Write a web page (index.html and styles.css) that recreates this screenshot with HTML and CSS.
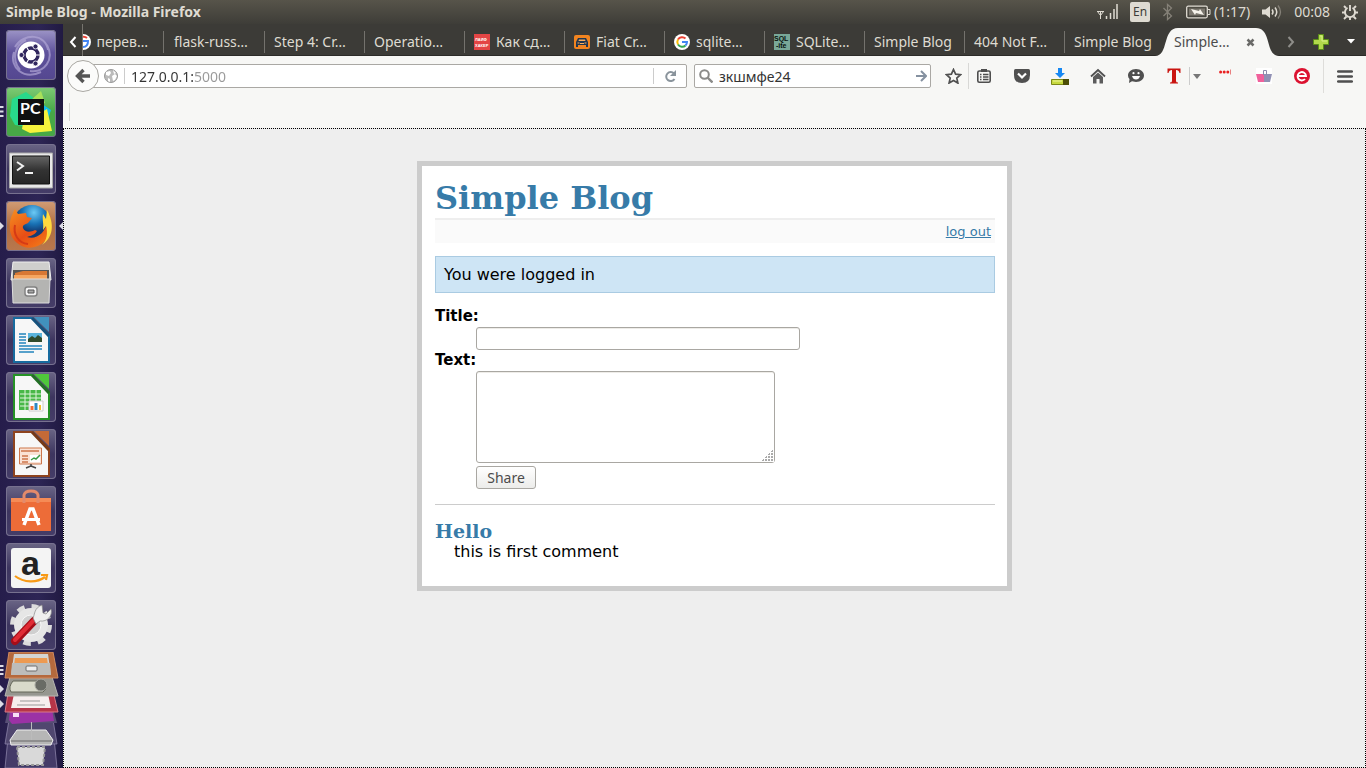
FILE: index.html
```html
<!DOCTYPE html>
<html lang="en">
<head>
<meta charset="utf-8">
<title>Simple Blog</title>
<link rel="stylesheet" href="styles.css">
</head>
<body>
<div class="desktop">
  <header class="panel">
    <span class="panel-title">Simple Blog - Mozilla Firefox</span>
    <div class="indicators">
      <svg class="ind-signal" width="22" height="18" viewBox="0 0 22 18" fill="none" stroke="#dfdbd2"><path d="M1 8.500h7M1.500 8.500l3 4 3-4M4.500 8v8"/><path d="M10.500 13v3M14.500 10v6M18 6v10M21 1v15" stroke-width="1.500"/></svg>
      <span class="keyboard">En</span>
      <svg width="12" height="18" viewBox="0 0 12 18" fill="none" stroke="#858178" stroke-width="1.300"><path d="M1.500 5l8 8-4 3.500v-15l4 3.500-8 8"/></svg>
      <div class="battery">
        <svg width="25" height="14" viewBox="0 0 25 14"><rect x=".7" y="1.200" width="20.600" height="11.600" rx="1.500" fill="none" stroke="#dfdbd2" stroke-width="1.300"/><rect x="3" y="3.500" width="16" height="7" fill="#7c786f"/><path d="M22 4.500h2v5h-2" fill="none" stroke="#dfdbd2"/><path d="M5 4l8 2 1-2 4 6-8-2-1 2z" fill="#f5f2ea"/></svg>
        <span>(1:17)</span>
      </div>
      <svg width="20" height="16" viewBox="0 0 20 16"><path d="M0 5.500h3.500L8 2v12l-4.500-3.500H0z" fill="#dfdbd2"/><path d="M10 5.500q2 2.500 0 5M13 3.500q3.500 4.500 0 9" fill="none" stroke="#dfdbd2" stroke-width="1.500"/><path d="M16 1.500q5 6.500 0 13" fill="none" stroke="#858178" stroke-width="1.300"/></svg>
      <span class="clock">00:08</span>
      <svg width="16" height="16" viewBox="0 0 16 16" fill="none" stroke="#dfdbd2"><path d="M5.500 3.800a5 5 0 1 0 5 0M8 1v6" stroke-width="1.900"/><path d="M2 2l2 2M14 2l-2 2M0 8.500h3M16 8.500h-3M2 15l2.500-2.500M14 15l-2.500-2.500M8 13v3" stroke-width="1.900"/></svg>
    </div>
  </header>

  <div class="workspace">
    <nav class="launcher" aria-label="Launcher">
      <button class="tile tile-dash" aria-label="Search your computer">
        <svg viewBox="0 0 50 50"><g fill="none" stroke="#b0a7d6" stroke-width="2" opacity=".7"><path d="M9 17C18 2 40 4 42 20M41 15c8 15-3 28-17 26M35 42C18 50 3 38 8 22M14 40C5 29 9 15 20 10"/></g><circle cx="25" cy="25" r="13.500" fill="#fff"/><circle cx="25" cy="25" r="7" fill="none" stroke="#31275e" stroke-width="3.500"/><g stroke="#fff" stroke-width="1.200"><path d="M25 25l12 0M25 25l-6-11M25 25l-6 11"/></g><circle cx="25" cy="25" r="5" fill="#fff"/><g fill="#31275e" stroke="#fff" stroke-width=".8"><circle cx="15.500" cy="25" r="2.500"/><circle cx="29.500" cy="16.500" r="2.500"/><circle cx="29.500" cy="33.500" r="2.500"/></g></svg>
      </button>
      <button class="tile tile-pycharm" aria-label="PyCharm">
        <svg viewBox="0 0 50 50"><path d="M6 12l14-7 12 9-10 26-13-2-5-9z" fill="#28d98b"/><path d="M35 4l4 12-13 6-2-8z" fill="#a8e05a"/><path d="M36 17l9 6-3 9-8 2z" fill="#13bdf0"/><path d="M17 36l24-14 5 22-22 2-8-4z" fill="#f6f23c"/><rect x="12" y="12" width="26" height="26" fill="#101010"/><text x="14" y="27" class="glyph-pc">PC</text><path d="M15 34h9" stroke="#fff" stroke-width="2"/></svg>
        <svg class="pips" viewBox="0 0 4 12"><path d="M0 1h3.500M0 5.500h3.500M0 10h3.500" stroke="#dcdce6" stroke-width="2"/></svg>
      </button>
      <button class="tile" aria-label="Terminal">
        <svg viewBox="0 0 50 50"><defs><linearGradient id="term" x2="0" y2="1"><stop stop-color="#666"/><stop offset=".5" stop-color="#333"/><stop offset="1" stop-color="#262626"/></linearGradient></defs><path d="M3.500 9h43v35h-43z" fill="#e8e8e8" stroke="#aaa"/><path d="M6.500 12h37v28h-37z" fill="url(#term)" stroke="#111"/><path d="M11 18l6 4-6 4.500M19 29h8" fill="none" stroke="#f2f2f2" stroke-width="2"/></svg>
      </button>
      <button class="tile tile-firefox" aria-label="Firefox">
        <svg viewBox="0 0 50 50"><defs><radialGradient id="globe" cx=".55" cy=".2"><stop stop-color="#6ccaf5"/><stop offset=".6" stop-color="#1972b5"/><stop offset="1" stop-color="#133c75"/></radialGradient><linearGradient id="fox" x2=".8" y2="1"><stop stop-color="#f69020"/><stop offset=".6" stop-color="#e84d16"/><stop offset="1" stop-color="#f47c17"/></linearGradient></defs><circle cx="26" cy="23" r="19" fill="url(#globe)"/><path d="M43 12c4 11 2 22-4 28-8 8-20 9-28 2C2 35 2 21 7 12c1-3 2-4 2-4l3 5 8-1 1 4 5 1-4 5c-2 1-6 2-5 5 2 5 8 4 12 2l2 1c-3 5-8 5-10 6 9 3 19-4 20-16z" fill="url(#fox)"/><path d="M41 9c8 14 6 28-5 35 5-5 6-12 4-19l-3 4c1-7-1-10 0-16l3 5z" fill="#ffd93e"/><path d="M9 24c-2 9 3 18 13 19" fill="none" stroke="#d53b16" stroke-width="2"/></svg>
        <svg class="mark-left" viewBox="0 0 4 8"><path d="M0 0l4 4-4 4z" fill="#dcdce6"/></svg>
        <svg class="mark-right" viewBox="0 0 4 8"><path d="M4 0L0 4l4 4z" fill="#dcdce6"/></svg>
      </button>
      <button class="tile" aria-label="Files">
        <svg viewBox="0 0 50 50"><path d="M7 4h36l2 18H5z" fill="#cfcfcd" stroke="#eee"/><path d="M7 12h36v14H7z" fill="#555"/><path d="M9 15l8-2h24v12H9z" fill="#d87834"/><path d="M8 17h33v5H8z" fill="#f5a660"/><path d="M6 21h38l-1 24H7z" fill="#b4b4b2" stroke="#ddd"/><rect x="19" y="29" width="12" height="9" rx="2.500" fill="#f4f4f4" stroke="#828282" stroke-width="1.500"/><path d="M22 32h6v3h-6z" fill="#a8a8a8" stroke="#555"/></svg>
      </button>
      <button class="tile" aria-label="LibreOffice Writer">
        <svg viewBox="0 0 50 50"><path d="M8 3h18l17 17v27H8z" fill="#f7f7f7" stroke="#176b9f" stroke-width="2"/><path d="M28 2h15v15z" fill="#4191bd"/><path d="M26 3l17 18" stroke="#15517c" stroke-width="3"/><path d="M22 18h14v9H22z" fill="#5ab4dc"/><path d="M22 27v-3l4-3 3 2 3-3 4 3v4z" fill="#304b2c"/><g stroke="#2385bd" stroke-width="1.500"><path d="M13 19h7M13 22h7M13 25h7M13 28h7M13 31h23M13 34h23M13 37h15"/></g></svg>
      </button>
      <button class="tile" aria-label="LibreOffice Calc">
        <svg viewBox="0 0 50 50"><path d="M8 3h18l17 17v27H8z" fill="#f7f7f7" stroke="#269226" stroke-width="2"/><path d="M28 2h15v15z" fill="#4fc73b"/><path d="M26 3l17 18" stroke="#236e25" stroke-width="3"/><path d="M13 18h22v20H13z" fill="#48b848"/><path d="M14 22h21M14 26h21M14 30h21M14 34h21M19 18v20M24 18v20M30 18v20" stroke="#dff4dc"/><path d="M23 29h14v10H23z" fill="#fff" stroke="#ccc"/><path d="M26 34v4" stroke="#f46e35" stroke-width="3"/><path d="M30 31v7" stroke="#2c89c4" stroke-width="3"/><path d="M34 33v5" stroke="#f3bf32" stroke-width="2"/></svg>
      </button>
      <button class="tile" aria-label="LibreOffice Impress">
        <svg viewBox="0 0 50 50"><path d="M8 3h18l17 17v27H8z" fill="#f7f7f7" stroke="#8e431e" stroke-width="2"/><path d="M28 2h15v15z" fill="#c46a38"/><path d="M26 3l17 18" stroke="#773917" stroke-width="3"/><path d="M13.500 19h22v16h-22z" fill="#fae2d5" stroke="#cd764b"/><path d="M15 22h18M16 27h6M16 30h6M16 33h6" stroke="#cd764b" stroke-width="1.500"/><path d="M24 26h10v7H24z" fill="#fff"/><path d="M25 31l3-2 2 1 4-4" fill="none" stroke="#3a9a43" stroke-width="1.500"/><path d="M25 35v2l-5 2M25 37l5 2" fill="none" stroke="#444" stroke-width="1.500"/></svg>
      </button>
      <button class="tile" aria-label="Ubuntu Software">
        <svg viewBox="0 0 50 50"><path d="M5 12h40v33H5z" fill="#ed6c38"/><path d="M5 12h40v4H5z" fill="#f58b56"/><path d="M18 17V9q1-4 7-4t7 4v8" fill="none" stroke="#e38a6a" stroke-width="3"/><path d="M18 39l6-16h3l6 16" fill="none" stroke="#fff" stroke-width="3.500"/><path d="M16 33.500h18" stroke="#fff" stroke-width="3"/></svg>
      </button>
      <button class="tile" aria-label="Amazon">
        <svg viewBox="0 0 50 50"><rect x="5" y="5" width="40" height="40" rx="3" fill="#f4f4f4"/><text x="15" y="32" class="glyph-a">a</text><path d="M9 33c9 7 22 7 30 1M35 32l6 0-1 5" fill="none" stroke="#f79a17" stroke-width="2.200"/></svg>
      </button>
      <button class="tile" aria-label="System Settings">
        <svg viewBox="0 0 50 50"><circle cx="25" cy="25" r="18.500" fill="none" stroke="#ddd" stroke-width="5" stroke-dasharray="7.500 7.030"/><circle cx="25" cy="25" r="17" fill="#e6e6e6"/><circle cx="25" cy="25" r="10" fill="#cfcfcf" stroke="#f6f6f6"/><path d="M9 41l19-20" stroke="#a60d18" stroke-width="8" stroke-linecap="round"/><path d="M9 40l18-19" stroke="#e02c35" stroke-width="4" stroke-linecap="round"/><path d="M27 18c2-4 1-10 9-13l1 8 3 1 5-5c2 7-4 13-11 12l-4 3z" fill="#efefef" stroke="#888" stroke-width=".7"/></svg>
      </button>
      <button class="stack" aria-label="More applications">
        <svg width="63" height="118" viewBox="0 0 63 118"><g stroke="#8b83a8" stroke-width=".8"><path d="M9 76h44l4 40H5z" fill="#443b68"/><path d="M10 62h42l5 30H5z" fill="#50476f"/></g><path d="M17 95h28l-2 18H19z" fill="#d9d9d9" stroke="#999" stroke-dasharray="3 2" stroke-width="2"/><path d="M17 78h29l7 10-2 5H11l-1-5z" fill="#b6b6b6" stroke="#eee"/><path d="M11 89h41" stroke="#666"/><path d="M9 53h43l5 18H5z" fill="#574e75"/><path d="M10 57h42l2 12-42 3-3-4z" fill="#9b32a5"/><path d="M13 61h6v4h-6z" fill="#f8def6"/><path d="M9 35h43l6 25H5z" fill="#b63548" stroke="#d97a85"/><path d="M14 42h34l3 14H11z" fill="#f7eeee"/><path d="M20 49h20M17 53h28" stroke="#999"/><path d="M10 25h42l6 19H5z" fill="#96968f" stroke="#b7b7b2"/><path d="M13 29h28l5 8-3 3H11q-3-5 2-11z" fill="#d9dacb" stroke="#646659"/><circle cx="41" cy="33" r="6" fill="#696b65" stroke="#a4a49e"/><path d="M9 0h44l5 26H5z" fill="#b5693d" stroke="#d18b60"/><path d="M14 2h34l3 21H11z" fill="#d4d4d2"/><path d="M15 6h32l1 7H14z" fill="#ed9a52"/><path d="M12 11h38l1 12H11z" fill="#bdbdbb"/><rect x="26" y="14" width="11" height="5" rx="1" fill="#eee" stroke="#6c6c6c"/><path d="M31.500 70v18" stroke="#bbb"/><g stroke="#dcdce6" stroke-width="2"><path d="M0 14h3.500M0 18h3.500M0 22h3.500"/></g><path d="M0 33l4 4-4 4zM0 48l4 4-4 4z" fill="#dcdce6"/></svg>
      </button>
    </nav>

    <div class="browser">
      <div class="tabbar">
        <button class="tab-scroll" aria-label="Scroll tabs left"><svg width="8" height="12" viewBox="0 0 8 12"><path d="M6.500 1L2 6l4.500 5" fill="none" stroke="#fff" stroke-width="2"/></svg></button>
        <div class="tabs">
          <button class="tab tab-clipped"><svg width="16" height="16" viewBox="0 0 16 16"><circle cx="8" cy="8" r="8" fill="#fff"/><path d="M8 7h5q0 6-5 6" fill="none" stroke="#4285f4" stroke-width="2"/><path d="M12 4a5 5 0 0 0-8 2" fill="none" stroke="#ea4335" stroke-width="2"/></svg><span>перев…</span></button>
          <button class="tab"><span>flask-russ…</span></button>
          <button class="tab"><span>Step 4: Cr…</span></button>
          <button class="tab"><span>Operatio…</span></button>
          <button class="tab"><svg width="16" height="16" viewBox="0 0 16 16"><path d="M0 0h16v16H0z" fill="#e34545"/><text x="1" y="7" class="glyph-tiny" fill="#fff">ЛАЙФ</text><text x="1" y="13" class="glyph-tiny" fill="#fff">ХАКЕР</text></svg><span>Как сд…</span></button>
          <button class="tab"><svg width="16" height="16" viewBox="0 0 16 16"><rect y="1" width="16" height="14" rx="2" fill="#f18420"/><path d="M2 8l2-4h8l2 4v5h-2v-2H4v2H2z" fill="#203650"/><path d="M5 5.500h6l.5 1.500h-7z" fill="#f8ae5e"/><path d="M3.500 9h2M10.500 9h2M6 9.500h4" stroke="#f8ae5e"/></svg><span>Fiat Cr…</span></button>
          <button class="tab"><svg width="16" height="16" viewBox="0 0 16 16"><circle cx="8" cy="8" r="8" fill="#fff"/><g fill="none" stroke-width="2"><path d="M11.500 4.500A5 5 0 0 0 4 5.500" stroke="#ea4335"/><path d="M4 5.500a5 5 0 0 0 0 5" stroke="#fbbc05"/><path d="M4 10.500a5 5 0 0 0 7.500 1" stroke="#34a853"/><path d="M11.500 11.500A5 5 0 0 0 13 8H8" stroke="#4285f4"/></g></svg><span>sqlite…</span></button>
          <button class="tab"><svg width="16" height="16" viewBox="0 0 16 16"><path d="M0 0h16v16H0z" fill="#79a898"/><text x="0" y="7" class="glyph-sql">SQL</text><text x="2" y="14" class="glyph-sql">-ite</text></svg><span>SQLite…</span></button>
          <button class="tab"><span>Simple Blog</span></button>
          <button class="tab"><span>404 Not F…</span></button>
          <button class="tab"><span>Simple Blog</span></button>
          <div class="tab tab-active">
            <svg class="tab-shape" width="124" height="28" viewBox="0 0 124 28"><path d="M0 28C14 28 7 0 23 0h78c16 0 9 28 23 28z" fill="#f7f7f5"/></svg>
            <span class="tab-label">Simple…</span>
            <button class="tab-close" aria-label="Close tab"><svg width="9" height="9" viewBox="0 0 9 9"><path d="M1.500 1.500l6 6M7.500 1.500l-6 6" stroke="#6a6a68" stroke-width="2.500"/></svg></button>
          </div>
        </div>
        <div class="tab-tools">
          <button class="icon-btn" aria-label="Scroll tabs right"><svg width="8" height="12" viewBox="0 0 8 12"><path d="M1.500 1L6 6l-4.500 5" fill="none" stroke="#8e8d89" stroke-width="2"/></svg></button>
          <button class="icon-btn" aria-label="New tab"><svg width="16" height="16" viewBox="0 0 16 16"><path d="M5.500.5h5v5h5v5h-5v5h-5v-5h-5v-5h5z" fill="#b2d94c" stroke="#5b8d18"/><path d="M7 2h2v5h5" fill="none" stroke="#d9f08a"/></svg></button>
          <button class="icon-btn" aria-label="List all tabs"><svg width="8" height="5" viewBox="0 0 8 5"><path d="M0 0h8L4 4.500z" fill="#fff"/></svg></button>
        </div>
      </div>

      <div class="toolbar">
        <button class="back" aria-label="Back"><svg width="16" height="16" viewBox="0 0 16 16"><path d="M8.500 2L2.500 8l6 6M3 8h12" fill="none" stroke="#555" stroke-width="3.400"/></svg></button>
        <div class="urlbar">
          <svg width="14" height="14" viewBox="0 0 14 14"><circle cx="7" cy="7" r="6.500" fill="#bbb" stroke="#999"/><path d="M2 3l4-1 1 2-2 3-3-1zM8 7l3-2 2 2-2 4-2 1zM4 9l2 1v3l-2-1z" fill="#fff"/><path d="M9 1l3 3-2 1z" fill="#fff"/></svg>
          <i class="field-rule"></i>
          <input class="url-input" type="text" aria-label="Address" value="127.0.0.1:5000">
          <i class="field-rule"></i>
          <button class="reload" aria-label="Reload"><svg width="13" height="13" viewBox="0 0 13 13"><path d="M10 3.500A4.500 4.500 0 1 0 10.500 9" fill="none" stroke="#8a949c" stroke-width="2"/><path d="M12 0v6H6z" fill="#8a949c"/></svg></button>
        </div>
        <div class="searchbar">
          <svg width="14" height="14" viewBox="0 0 14 14"><circle cx="5.500" cy="5.500" r="4.300" fill="none" stroke="#8a8a88" stroke-width="2"/><path d="M8.500 8.500l5 5" stroke="#8a8a88" stroke-width="2.400"/></svg>
          <input class="search-input" type="text" aria-label="Search" value="зкшмфе24">
          <button class="go" aria-label="Go"><svg width="11" height="12" viewBox="0 0 11 12"><path d="M5 1l5 5-5 5M0 6h9" fill="none" stroke="#8591a0" stroke-width="2"/></svg></button>
        </div>
        <div class="tools">
          <button class="tool tool-star" aria-label="Bookmark"><svg width="17" height="16" viewBox="0 0 17 16"><path d="M8.500 1.500l2.100 4.700 5 .5-3.800 3.400 1.100 5-4.400-2.600L4.100 15l1.100-4.900L1.400 6.700l5-.5z" fill="none" stroke="#505050" stroke-width="1.700"/></svg></button>
          <button class="tool" aria-label="Bookmarks list"><svg width="14" height="14" viewBox="0 0 14 14"><rect x=".8" y="2" width="12.400" height="11.200" rx="1.500" fill="none" stroke="#4e4e4e" stroke-width="1.600"/><path d="M4 0h6v3H4z" fill="#4e4e4e"/><path d="M3 5.500h1.500M6 5.500h5.500M3 8h1.500M6 8h5.500M3 10.500h1.500M6 10.500h5.500" stroke="#4e4e4e" stroke-width="1.300"/></svg></button>
          <button class="tool" aria-label="Pocket"><svg width="16" height="14" viewBox="0 0 16 14"><path d="M1.500 0h13Q16 0 16 1.500V6q0 8-8 8T0 6V1.500Q0 0 1.500 0z" fill="#505050"/><path d="M4 4.500l4 4 4-4" fill="none" stroke="#fff" stroke-width="2.200"/></svg></button>
          <button class="tool" aria-label="Downloads"><svg width="18" height="18" viewBox="0 0 18 18"><path d="M7 1h4v5h3L9 11 4 6h3z" fill="#1788f3"/><path d="M.5 12.500h12v5H.5z" fill="#c7d93e" stroke="#7c8818"/><path d="M12 12h6v6h-6z" fill="#4c4e05"/><path d="M2 14h9" stroke="#edf59a"/></svg></button>
          <button class="tool" aria-label="Home"><svg width="16" height="16" viewBox="0 0 16 16"><path d="M1 8.500L8 2l7 6.500" fill="none" stroke="#505050" stroke-width="1.800"/><path d="M3 9l5-4.500L13 9v6.500H9.500V11h-3v4.500H3z" fill="#5c5c5c"/></svg></button>
          <button class="tool" aria-label="Hello"><svg width="16" height="16" viewBox="0 0 16 16"><path d="M8 1c5 0 8 3 8 6.500S13 14 8 14l-4-.8L1 15l.5-4Q0 9.500 0 7.500C0 4 3 1 8 1z" fill="#505050"/><path d="M4 8h8q-1 3.500-4 3.500T4 8z" fill="#fff"/><circle cx="5.500" cy="5.200" r="1.100" fill="#fff"/><circle cx="10.500" cy="5.200" r="1.100" fill="#fff"/></svg></button>
          <div class="tool-split">
            <button class="tool" aria-label="Translate"><svg width="14" height="16" viewBox="0 0 14 16"><path d="M.5.500h13V5h-1q-.5-3-3.500-3v11q0 1.500 2 1.500v1H3v-1q2 0 2-1.500V2Q2 2 1.500 5h-1z" fill="#ca1510"/></svg></button>
            <i class="split-rule"></i>
            <button class="tool-arrow" aria-label="Translate options"><svg width="8" height="5" viewBox="0 0 8 5"><path d="M0 0h8L4 5z" fill="#777"/></svg></button>
          </div>
          <button class="tool tool-dots" aria-label="Passwords"><svg width="12" height="16" viewBox="0 0 12 16"><g fill="#e92020"><circle cx="1.600" cy="4" r="1.500"/><circle cx="5.200" cy="4" r="1.500"/><circle cx="8.800" cy="4" r="1.500"/></g><path d="M11.500 1.500v5" stroke="#e98080"/></svg></button>
          <button class="tool" aria-label="Shopping"><svg width="16" height="16" viewBox="0 0 16 16"><path d="M0 0h16v16H0z" fill="#fff"/><path d="M0 6h8v8H2z" fill="#f0619b"/><path d="M8 6h8l-2 8H8z" fill="#9191b4"/><path d="M7.500 7V2.500h3V7" fill="none" stroke="#8c8cad"/></svg></button>
          <button class="tool" aria-label="Add-on"><svg width="16" height="16" viewBox="0 0 16 16"><circle cx="8" cy="8" r="8" fill="#dc1230"/><path d="M4.500 8H12A4.200 4.200 0 1 0 11 11" fill="none" stroke="#fff" stroke-width="1.900"/></svg></button>
          <i class="menu-rule"></i>
          <button class="tool tool-menu" aria-label="Open menu"><svg width="16" height="13" viewBox="0 0 16 13"><path d="M1.200 1.500h13.600M1.200 6.500h13.600M1.200 11.500h13.600" stroke="#4f4f4f" stroke-width="2.600" stroke-linecap="round"/></svg></button>
        </div>
      </div>
      <div class="addonbar"><i class="addon-rule"></i></div>

      <main class="viewport">
        <div class="page">
          <h1 class="blog-title">Simple Blog</h1>
          <div class="metanav"><a class="blog-link" href="#logout">log out</a></div>
          <div class="flash">You were logged in</div>
          <form class="add-entry">
            <label class="entry-label" for="title">Title:</label>
            <input class="entry-title" id="title" type="text">
            <label class="entry-label" for="text">Text:</label>
            <textarea class="entry-text" id="text"></textarea>
            <button class="share" type="button">Share</button>
          </form>
          <article class="entry">
            <h2 class="entry-heading">Hello</h2>
            <p class="entry-body">this is first comment</p>
          </article>
        </div>
      </main>
    </div>
  </div>
</div>
</body>
</html>
```
FILE: styles.css
```css
* { box-sizing: border-box; }
html, body { height: 100%; }
body {
  margin: 0;
  overflow: hidden;
  font: 14px/20px "Noto Sans", "Open Sans", sans-serif;
}
button {
  margin: 0;
  padding: 0;
  border: 0;
  background: none;
  font: inherit;
  color: inherit;
}
svg { display: block; flex: none; }
h1, h2, p { margin: 0; }

.desktop { display: flex; flex-direction: column; height: 100%; }

/* Top panel */
.panel {
  display: flex;
  align-items: center;
  justify-content: space-between;
  height: 24px;
  padding: 0 8px 0 6px;
  background: linear-gradient(#57544a, #3e3d38);
  color: #dfdbd2;
}
.panel-title { font-weight: 700; font-size: 14px; }
.indicators { display: flex; align-items: center; gap: 12px; }
.keyboard {
  width: 20px;
  border-radius: 2px;
  background: #dfdbd2;
  color: #3e3d38;
  font-size: 12px;
  text-align: center;
}
.battery { display: flex; align-items: center; gap: 3px; }

/* Launcher */
.workspace { display: flex; flex: 1; min-height: 0; }
.launcher {
  display: flex;
  flex-direction: column;
  align-items: center;
  gap: 7px;
  width: 63px;
  padding: 6px 1px 0 0;
  overflow: hidden;
  background: linear-gradient(90deg, #261d4b, #2d2555 60%, #211a42);
}
.tile {
  position: relative;
  flex: none;
  width: 50px;
  height: 50px;
  border-radius: 4px;
  background: linear-gradient(#6a6585, #3d355f 50%, #453d68);
  box-shadow: inset 0 0 0 1px #77718f;
}
.tile-dash { background: linear-gradient(#9c94c6, #5f529c 45%, #544790); }
.tile-pycharm { background: linear-gradient(#7ecb75, #47a846 50%); }
.tile-firefox { background: linear-gradient(#d29d75, #ae6d42 50%, #b9784e); }
.pips { position: absolute; left: -6px; top: 19px; width: 4px; height: 12px; }
.mark-left { position: absolute; left: -6px; top: 21px; width: 4px; height: 8px; }
.mark-right { position: absolute; right: -7px; top: 21px; width: 4px; height: 8px; }
.stack { flex: none; width: 63px; margin: -5px -1px 0 0; }
.glyph-pc { font: 700 16px Lato, sans-serif; fill: #fff; }
.glyph-a { font: 700 34px "Liberation Sans", sans-serif; fill: #222; }
.glyph-tiny { font: 700 4px "Liberation Sans", sans-serif; }
.glyph-sql { font: 700 7px "Liberation Sans", sans-serif; fill: #07120e; }

/* Tab strip */
.browser { display: flex; flex: 1; flex-direction: column; min-width: 0; background: #f7f7f5; }
.tabbar { display: flex; height: 32px; background: #3c3b37; color: #dfdbd2; box-shadow: inset 0 -1px #2c2b28; }
.tab-scroll {
  display: flex;
  align-items: center;
  justify-content: center;
  width: 20px;
  padding-top: 3px;
  border-right: 1px solid #77756f;
}
.tabs { display: flex; flex: 1; min-width: 0; }
.tab {
  position: relative;
  display: flex;
  flex: 0 0 100px;
  align-items: center;
  gap: 6px;
  padding: 4px 4px 0 10px;
  white-space: nowrap;
}
.tab::after {
  content: "";
  position: absolute;
  right: -1px;
  top: 7px;
  width: 1px;
  height: 22px;
  background: #74726d;
}
.tab:nth-last-child(2)::after, .tab-active::after { display: none; }
.tab-clipped { flex-basis: 81px; justify-content: flex-end; padding: 4px 16px 0 0; overflow: hidden; }
.tab-clipped::after { right: 0; }
.tab-active { color: #4c4c4c; }
.tab-shape { position: absolute; left: -9px; bottom: 0; }
.tab-label, .tab-close { position: relative; }
.tab-label { flex: 1; }
.tab-close { padding-right: 5px; }
.tab-tools { display: flex; align-items: center; padding-top: 3px; }
.icon-btn { display: flex; align-items: center; justify-content: center; width: 30px; height: 26px; }

/* Navigation toolbar */
.toolbar { display: flex; align-items: center; height: 40px; padding: 0 6px 0 4px; }
.back {
  position: relative;
  z-index: 1;
  display: flex;
  flex: none;
  align-items: center;
  justify-content: center;
  width: 32px;
  height: 32px;
  margin-right: -16px;
  border: 1px solid #a9a7a2;
  border-radius: 50%;
  background: #fbfbfa;
}
.urlbar, .searchbar {
  display: flex;
  align-items: center;
  height: 24px;
  border: 1px solid #aaa8a4;
  border-radius: 2px;
  background: #fff;
}
.urlbar { flex: 1; min-width: 0; padding-left: 20px; margin-right: 7px; gap: 6px; }
.field-rule { width: 1px; height: 16px; background: #ccc; }
.url-input, .search-input {
  flex: 1;
  min-width: 0;
  height: 22px;
  padding: 0;
  border: 0;
  outline: 0;
  background: none;
  font: inherit;
  color: #333;
}
.url-input {
  background: linear-gradient(90deg, #333 62px, #999 62px);
  background-clip: text;
  color: transparent;
}
.reload { display: flex; justify-content: center; width: 26px; padding-right: 6px; }
.searchbar { width: 237px; padding: 0 3px 0 4px; gap: 6px; }
.tools { display: flex; align-items: center; gap: 8px; padding-left: 7px; }
.tool { display: flex; align-items: center; justify-content: center; width: 30px; height: 26px; }
.tool-star { width: 31px; margin-right: -8px; border-right: 1px solid #d8d8d6; }
.tool-split { display: flex; align-items: center; }
.split-rule { width: 1px; height: 18px; background: #ccc; }
.tool-arrow { display: flex; justify-content: flex-end; width: 11px; }
.tool-dots { width: 32px; }
.menu-rule { width: 1px; height: 34px; margin: 0 -2px; background: #deddda; }
.addonbar { display: flex; align-items: center; height: 32px; padding-left: 6px; }
.addon-rule { width: 1px; height: 18px; background: #d6d6d4; }

/* Blog page */
.viewport {
  flex: 1;
  min-height: 0;
  padding: 32px 16px;
  overflow: auto;
  border: 1px dotted #000;
  background: #eee;
  color: #000;
  font: 16px/19px "DejaVu Sans", sans-serif;
}
.page {
  max-width: 595px;
  margin: 0 auto;
  padding: 13px 12px 25px 13px;
  border: 5px solid #ccc;
  background: #fff;
}
.blog-title, .entry-heading, .blog-link { color: #377ba8; }
.blog-title {
  border-bottom: 2px solid #eee;
  font: 700 32px/39px "DejaVu Serif", serif;
}
.metanav { padding: 4px 4px 3px; background: #fafafa; font-size: 13px; line-height: 16px; text-align: right; }
.flash { margin: 13px 0; padding: 8px; border: 1px solid #aacbe2; background: #cee5f5; }
.add-entry {
  display: flex;
  flex-direction: column;
  align-items: flex-start;
  padding-bottom: 15px;
  border-bottom: 1px solid #ccc;
}
.entry-label { font-size: 15px; font-weight: 700; line-height: 21px; }
.entry-title, .entry-text, .share {
  margin-left: 41px;
  border: 1px solid #a9a7a2;
  border-radius: 3px;
  font: 14px/20px "Noto Sans", sans-serif;
}
.entry-title { width: 324px; height: 23px; box-shadow: inset 0 1px #eeece8; }
.entry-text { width: 299px; height: 92px; margin-bottom: 3px; resize: both; box-shadow: inset 0 1px #eeece8; }
.entry-text::-webkit-resizer {
  background:
    linear-gradient(135deg, #fff 55%, transparent 55%),
    radial-gradient(circle at 1px 1px, #aaa 1px, #fff 1px) 0 0 / 3px 3px;
}
.share { width: 60px; height: 23px; background: linear-gradient(#fff, #ececea); color: #4c4c4c; }
.entry { padding-top: 15px; }
.entry-heading { font: 700 19px/22px "DejaVu Serif", serif; }
.entry-body { padding-left: 19px; }
```
